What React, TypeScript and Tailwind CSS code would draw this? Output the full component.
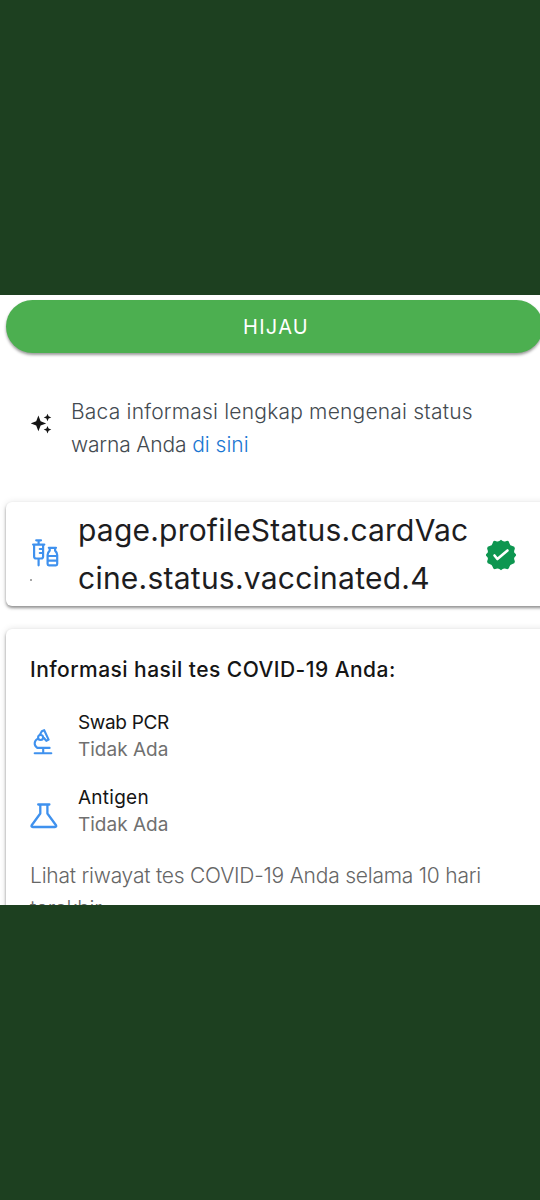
import type { ReactNode } from 'react';

function SparkleIcon() {
  return (
    <svg width="21" height="21" viewBox="0 0 21 21" fill="#151515">
      <path d="M7.4 2.6 9.6 8.2 15.2 10.4 9.6 12.6 7.4 18.2 5.2 12.6-.4 10.4 5.2 8.2Z" />
      <path d="m16.5.7 1.1 2.6 2.7 1.1-2.7 1.1-1.1 2.7-1.1-2.7-2.7-1.1 2.7-1.1ZM16.5 12.9l1.1 2.6 2.7 1.1-2.7 1.1-1.1 2.7-1.1-2.7-2.7-1.1 2.7-1.1Z" />
    </svg>
  );
}

function VaccineIcon() {
  return (
    <svg width="28" height="29" viewBox="0 0 28 29" fill="none" stroke="#3f91ee" strokeWidth="2.2" strokeLinecap="round" strokeLinejoin="round">
      <path d="M5.200 1.300h4.800M7.600 1.300v4.300M2.100 5.600h11.200M3.100 5.600V17.500q0 2 2 2h5q2 0 2-2V5.600M7.600 20v6.300M8.800 10h2.500M8.800 14h2.500" />
      <path d="M17.800 8.800h7.200M18.700 9v2.600q-2.100 2-2.100 4.400v9q0 1.300 1.300 1.300h7q1.300 0 1.300-1.300v-9q0-2.400-2.100-4.400V9M17 17h9M17 21.600h9" />
    </svg>
  );
}

function VerifiedIcon() {
  return (
    <svg width="32" height="32" viewBox="0 0 32 32">
      <path
        d="M16 .8Q18.4 3.4 20.8 2.2 23.8.9 24.4 4.2 24.9 6.7 27.4 7.1 30.8 7.6 29.5 10.8 28.4 13.2 30.2 14.6 32 16 30.2 17.4 28.4 18.8 29.5 21.2 30.8 24.4 27.4 24.9 24.9 25.3 24.4 27.8 23.8 31.1 20.8 29.8 18.4 28.6 16 31.2 13.6 28.6 11.2 29.8 8.2 31.1 7.6 27.8 7.1 25.3 4.6 24.9 1.2 24.4 2.5 21.2 3.6 18.8 1.8 17.4 0 16 1.8 14.6 3.6 13.2 2.5 10.8 1.2 7.6 4.6 7.1 7.1 6.7 7.6 4.2 8.2.9 11.2 2.2 13.6 3.4 16 .8Z"
        fill="#0d9650"
      />
      <path d="m9.500 16.500 2.900 3.500 10.100-8.500" fill="none" stroke="#fff" strokeWidth="2.6" strokeLinecap="round" strokeLinejoin="round" />
    </svg>
  );
}

function MicroscopeIcon() {
  return (
    <svg width="20" height="26" viewBox="0 0 20 26" fill="none" stroke="#3f91ee" strokeWidth="2.1" strokeLinecap="round" strokeLinejoin="round">
      <path d="M1.700 24.300h16.600M4.300 18.900h12.300M10.200 19v5M5 9.600C.8 11.800.6 16.500 4.300 18.900" />
      <path d="m6.900 5.800 1.900-3.500 2.400-1.100 4.400 9.400-2.300 1.200-2.600-3" />
      <circle cx="7.600" cy="8.500" r="2.500" />
    </svg>
  );
}

function FlaskIcon() {
  return (
    <svg width="28" height="26" viewBox="0 0 28 26" fill="none" stroke="#3f91ee" strokeWidth="2.3" strokeLinecap="round" strokeLinejoin="round">
      <path d="M8.200 1.500h11.200M10.300 1.700v8.800L1.700 22.200q-.8 1.800 1 1.800h22.300q1.800 0 1-1.800L17.400 10.500V1.700" />
    </svg>
  );
}

function TestRow({ icon, name, result }: { icon: ReactNode; name: ReactNode; result: string }) {
  return (
    <div className="flex h-[75px]">
      <div className="flex h-[61px] w-[48px] shrink-0 items-end">{icon}</div>
      <div className="text-[19px] leading-[27px]">
        {name}
        <p className="text-[#707070]">{result}</p>
      </div>
    </div>
  );
}

export default function App() {
  return (
    <div className="flex h-[1200px] w-full flex-col overflow-hidden bg-[#1d4020] font-['Inter',sans-serif] whitespace-nowrap">
      <main className="mt-[295px] h-[610px] overflow-hidden bg-white pt-[5px] pl-[6px]">
        <div className="flex h-[53px] w-[537px] items-center justify-center rounded-full bg-[#4caf50] pt-px pl-[3px] text-[20px] tracking-[1.3px] text-white shadow-[0_2px_3px_rgba(0,0,0,0.4)]">
          HIJAU
        </div>

        <section className="mt-[42px] flex h-[66px] pl-[25px]">
          <div className="flex w-[40px] shrink-0 items-center pb-[9px]">
            <SparkleIcon />
          </div>
          <p className="text-[21px] leading-[33px] font-light text-[#434a50]">
            <span className="tracking-[0.2px]">Baca informasi lengkap mengenai status</span>
            <br />
            <span className="tracking-[-0.15px]">warna Anda </span>
            <a className="text-[#1976d2]">di sini</a>
          </p>
        </section>

        <section className="mt-[41px] flex h-[104px] w-[560px] rounded-[6px] bg-white pt-[4px] pl-[24px] shadow-[0_2px_3px_rgba(0,0,0,0.4),0_0_7px_rgba(0,0,0,0.1)]">
          <div className="flex w-[48px] shrink-0 flex-col pt-[33px] pl-[1px]">
            <VaccineIcon />
            <span className="mt-[11px] -ml-[1px] size-[2px] rounded-full bg-[#888]" />
          </div>
          <p className="w-[407px] text-[30px] leading-[48px] text-[#1d1d1f]">
            <span className="tracking-[0.21px]">page.profileStatus.cardVac</span>
            <br />
            <span className="tracking-[0.24px]">cine.status.vaccinated.4</span>
          </p>
          <div className="pt-[33px]">
            <VerifiedIcon />
          </div>
        </section>

        <section className="mt-[23px] h-[330px] w-[560px] rounded-[6px] bg-white pt-[24px] pl-[24px] shadow-[0_2px_3px_rgba(0,0,0,0.4),0_0_7px_rgba(0,0,0,0.12)]">
          <h2 className="h-[56px] text-[21px] leading-[34px] font-[450] tracking-[0.45px] text-[#151515]">Informasi hasil tes COVID-19 Anda:</h2>
          <TestRow
            icon={<span className="mb-[15px] ml-[3px]"><MicroscopeIcon /></span>}
            name={<p className="tracking-[-0.35px] text-[#151515]">Swab PCR</p>}
            result="Tidak Ada"
          />
          <TestRow
            icon={<span className="mb-[16px]"><FlaskIcon /></span>}
            name={<p className="tracking-[0.25px] text-[#151515]">Antigen</p>}
            result="Tidak Ada"
          />
          <p className="text-[21px] leading-[33px] font-light tracking-[-0.22px] text-[#666]">
            Lihat riwayat tes COVID-19 Anda selama 10 hari
            <br />
            terakhir
          </p>
        </section>
      </main>
    </div>
  );
}
